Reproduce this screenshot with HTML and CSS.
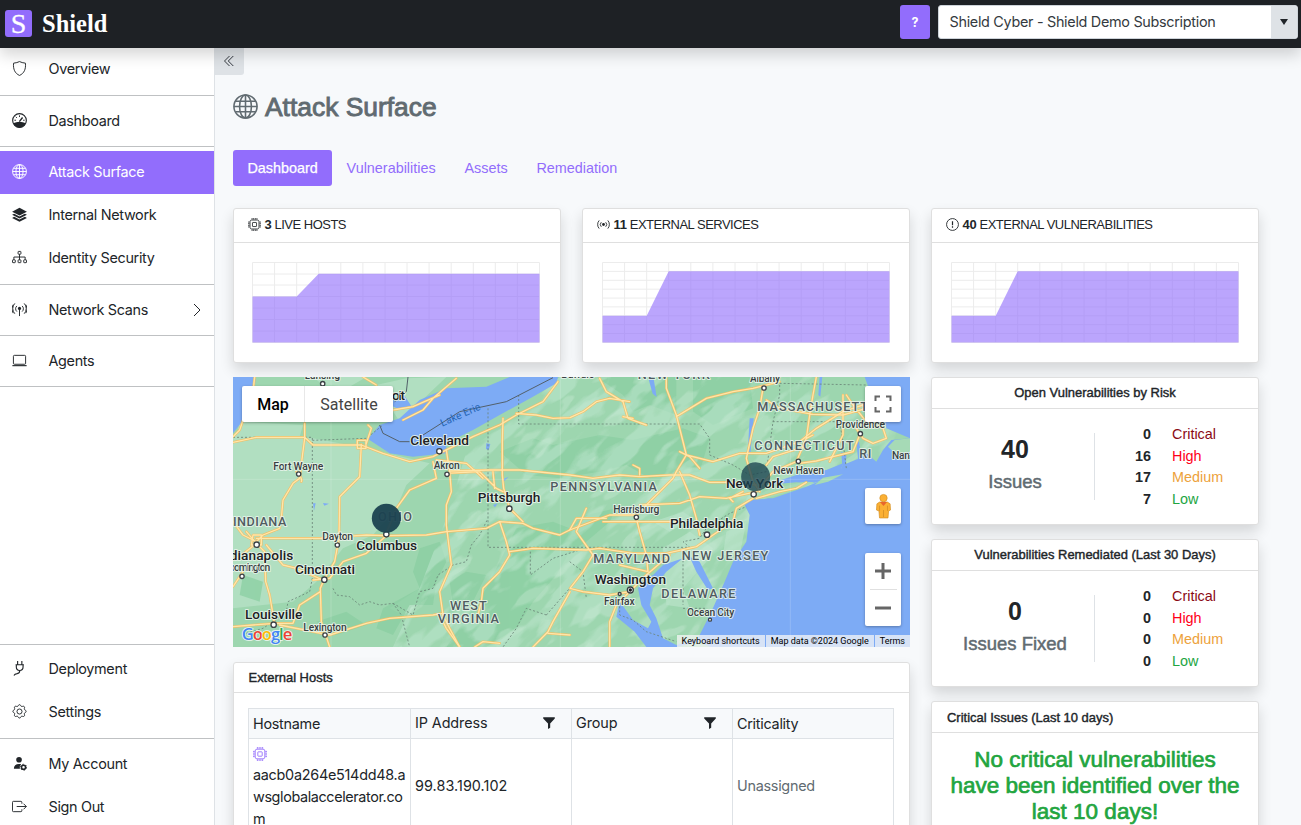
FILE: index.html
```html
<!DOCTYPE html>
<html lang="en">
<head>
<meta charset="utf-8">
<title>Shield - Attack Surface</title>
<link rel="stylesheet" href="styles.css">
</head>
<body>
<svg class="defs" width="0" height="0" aria-hidden="true">
  <symbol id="globe" viewBox="0 0 16 16"><g fill="none" stroke="currentColor"><circle cx="8" cy="8" r="7.4"/><ellipse cx="8" cy="8" rx="3.8" ry="7.4"/><path d="M8 .5v15M.5 8h15M1.6 4.6h12.8M1.6 11.4h12.8"/></g></symbol>
  <symbol id="cpu" viewBox="0 0 16 16"><g fill="none" stroke="currentColor"><rect x="2.5" y="2.5" width="11" height="11" rx="2"/><rect x="5.5" y="5.5" width="5" height="5" rx=".6"/><path d="M5 0v2M7 0v2M9 0v2M11 0v2M5 14v2M7 14v2M9 14v2M11 14v2M0 5h2M0 7h2M0 9h2M0 11h2M14 5h2M14 7h2M14 9h2M14 11h2"/></g></symbol>
  <symbol id="funnel" viewBox="0 0 12 12"><path fill="currentColor" d="M.2.3h11.600v1.300L7.200 6.600v4.200L5 12V6.600L.2 1.600z"/></symbol>
</svg>

<header class="topbar">
  <div class="brand"><span class="brand-mark">S</span><span class="brand-name">Shield</span></div>
  <div class="topbar-tools">
    <button class="help">?</button>
    <div class="select"><span class="select-value">Shield Cyber - Shield Demo Subscription</span><span class="select-arrow"><svg width="8" height="6" viewBox="0 0 8 6"><path d="M0 0h8L4 6z" fill="#212529"/></svg></span></div>
  </div>
</header>

<div class="shell">
  <nav class="sidebar">
    <div class="nav-group first">
      <a class="nav-item"><svg class="ico" viewBox="0 0 16 16"><path d="M8 .6C6.300 1.500 4.200 2 1.700 2.300 1 8.500 3 13.200 8 15.400c5-2.200 7-6.900 6.300-13.100C11.800 2 9.700 1.500 8 .6z" fill="none" stroke="currentColor"/></svg><span>Overview</span></a>
    </div>
    <div class="nav-group">
      <a class="nav-item"><svg class="ico" viewBox="0 0 16 16"><circle cx="8" cy="8" r="7.300" fill="none" stroke="currentColor" stroke-width="1.200"/><path fill="currentColor" d="M1.300 11c2-.9 4.300-1.400 6.700-1.400s4.700.5 6.700 1.400c-1 2.700-3.600 4.600-6.700 4.600S2.300 13.700 1.300 11z"/><path d="M7.800 9.200l3.500-4.400" stroke="currentColor" stroke-width="1.500"/><path d="M8 2.500v1.800M4 4l1.200 1.200M2.500 7.700h1.800M11.800 7.700h1.700" stroke="currentColor"/></svg><span>Dashboard</span></a>
    </div>
    <div class="nav-group roomy">
      <a class="nav-item active"><svg class="ico"><use href="#globe"/></svg><span>Attack Surface</span></a>
      <a class="nav-item"><svg class="ico" viewBox="0 0 16 16"><path fill="currentColor" d="M8 .9L15.900 5 8 9 .1 5zM2.300 7.200L.1 8.300 8 12.300l7.900-4-2.200-1.100L8 10.100zM2.300 10.500L.1 11.600 8 15.600l7.900-4-2.200-1.100L8 13.400z"/></svg><span>Internal Network</span></a>
      <a class="nav-item"><svg class="ico" viewBox="0 0 16 16"><g fill="none" stroke="currentColor"><rect x="6.500" y="1.500" width="3" height="3" rx=".5"/><path d="M8 4.500v6M2 10.500V7.500h12v3"/><rect x=".5" y="10.500" width="3" height="3" rx=".5"/><rect x="6.500" y="10.500" width="3" height="3" rx=".5"/><rect x="12.500" y="10.500" width="3" height="3" rx=".5"/></g></svg><span>Identity Security</span></a>
    </div>
    <div class="nav-group">
      <a class="nav-item"><svg class="ico" viewBox="0 0 16 16"><circle cx="8" cy="6.800" r="1.700" fill="currentColor"/><path d="M8 7v8M3 1.500a8 8 0 0 0 0 11M13 1.500a8 8 0 0 1 0 11M5.200 4.200a4 4 0 0 0 0 6M10.800 4.200a4 4 0 0 1 0 6M1.200 2.900a8 8 0 0 0 0 9M14.800 2.900a8 8 0 0 1 0 9" fill="none" stroke="currentColor"/></svg><span>Network Scans</span><svg class="chevron" viewBox="0 0 8 14"><path d="M1 1l6 6-6 6" fill="none" stroke="currentColor"/></svg></a>
    </div>
    <div class="nav-group">
      <a class="nav-item"><svg class="ico" viewBox="0 0 16 16"><rect x="1.500" y="2.500" width="13" height="9.500" rx="1" fill="none" stroke="currentColor"/><path d="M.4 13.500h15.200" stroke="currentColor" stroke-width="1.200"/></svg><span>Agents</span></a>
    </div>
    <div class="spacer"></div>
    <div class="nav-group lower">
      <a class="nav-item"><svg class="ico" viewBox="0 0 16 16"><path d="M6 0v4M10.500 0v4M3.800 4h8.900M4.600 4v2.500a3.600 3.600 0 0 0 7.200 0V4M8.200 10c.3 2.600-.7 3.200-2.700 3.500-1.600.2-2.800.7-3.400 2" fill="none" stroke="currentColor" stroke-width="1.200"/></svg><span>Deployment</span></a>
      <a class="nav-item"><svg class="ico" viewBox="0 0 16 16"><g fill="none" stroke="currentColor"><circle cx="8" cy="8" r="2.700"/><path d="M6.700 1.700c.4-1.300 2.200-1.300 2.600 0 .3.900 1.300 1.300 2.100.8 1.200-.6 2.500.7 1.900 1.900-.5.800 0 1.900.8 2.100 1.300.4 1.300 2.300 0 2.700-.8.200-1.300 1.300-.8 2.100.6 1.200-.7 2.500-1.900 1.900-.8-.5-1.800 0-2.100.8-.4 1.300-2.200 1.300-2.600 0-.3-.8-1.300-1.300-2.100-.8-1.200.6-2.500-.7-1.900-1.900.5-.8 0-1.900-.8-2.100-1.300-.4-1.300-2.300 0-2.700.8-.2 1.300-1.300.8-2.100-.6-1.200.7-2.500 1.900-1.900.8.5 1.800.1 2.100-.8z"/></g></svg><span>Settings</span></a>
    </div>
    <div class="nav-group last">
      <a class="nav-item"><svg class="ico" viewBox="0 0 16 16"><circle cx="7.500" cy="4" r="3" fill="currentColor"/><path fill="currentColor" d="M2 13.500C2 10.500 4 8.500 7.500 8.500c1 0 1.700.1 2.300.3a4.500 4.500 0 0 0-1.400 4.700z"/><circle cx="12.300" cy="12" r="2.200" fill="none" stroke="currentColor" stroke-width="1.700"/><circle cx="12.300" cy="12" r="3.200" fill="none" stroke="currentColor" stroke-width="1" stroke-dasharray="1.500 1.850"/></svg><span>My Account</span></a>
      <a class="nav-item"><svg class="ico" viewBox="0 0 16 16"><path d="M10.500 5V3.500a1 1 0 0 0-1-1h-8a1 1 0 0 0-1 1v9a1 1 0 0 0 1 1h8a1 1 0 0 0 1-1V11M5 8h10.300M12.300 5l3 3-3 3" fill="none" stroke="currentColor"/></svg><span>Sign Out</span></a>
    </div>
  </nav>

  <main class="content">
    <button class="collapse"><svg width="10" height="12" viewBox="0 0 10 12"><path d="M5.500 1l-5 5 5 5M9.300 1l-5 5 5 5" fill="none" stroke="#343a40"/></svg></button>
    <h1 class="title"><svg><use href="#globe"/></svg>Attack Surface</h1>
    <div class="tabs"><a class="tab on">Dashboard</a><a class="tab">Vulnerabilities</a><a class="tab">Assets</a><a class="tab">Remediation</a></div>

    <section class="stats">
      <article class="card stat">
        <div class="stat-head"><svg><use href="#cpu"/></svg><b>3</b><span>LIVE HOSTS</span></div>
        <svg class="chart" viewBox="0 0 288 81"><path class="grid" d="M.5 .5H287.500M.5 12H287.500M.5 23H287.500M.5 34.500H287.500M.5 46H287.500M.5 57.500H287.500M.5 69H287.500M.5 80.500H287.500M.5 .5V80.500M22.600 .5V80.500M44.700 .5V80.500M66.700 .5V80.500M88.800 .5V80.500M110.900 .5V80.500M133 .5V80.500M155 .5V80.500M177.100 .5V80.500M199.200 .5V80.500M221.300 .5V80.500M243.300 .5V80.500M265.400 .5V80.500M287.500 .5V80.500"/><path class="area" d="M.5 34.500H44.700L66.700 11.800H287.500V80.500H.5z"/></svg>
      </article>
      <article class="card stat">
        <div class="stat-head"><svg viewBox="0 0 16 16"><circle cx="8" cy="8" r="1.700" fill="currentColor"/><path d="M5.300 5.200a4 4 0 0 0 0 5.600M10.700 5.200a4 4 0 0 1 0 5.600M2.700 3a7.500 7.500 0 0 0 0 10M13.300 3a7.500 7.500 0 0 1 0 10" fill="none" stroke="currentColor" stroke-width="1.100"/></svg><b>11</b><span>EXTERNAL SERVICES</span></div>
        <svg class="chart" viewBox="0 0 288 81"><path class="grid" d="M.5 .5H287.500M.5 9.400H287.500M.5 18.300H287.500M.5 27.200H287.500M.5 36.100H287.500M.5 44.900H287.500M.5 53.800H287.500M.5 62.700H287.500M.5 71.600H287.500M.5 80.500H287.500M.5 .5V80.500M22.600 .5V80.500M44.700 .5V80.500M66.700 .5V80.500M88.800 .5V80.500M110.900 .5V80.500M133 .5V80.500M155 .5V80.500M177.100 .5V80.500M199.200 .5V80.500M221.300 .5V80.500M243.300 .5V80.500M265.400 .5V80.500M287.500 .5V80.500"/><path class="area" d="M.5 53.800H44.700L66.700 9.200H287.500V80.500H.5z"/></svg>
      </article>
      <article class="card stat">
        <div class="stat-head"><svg viewBox="0 0 16 16"><circle cx="8" cy="8" r="7.300" fill="none" stroke="currentColor" stroke-width="1.100"/><path d="M8 4v5M8 10.300v1.700" stroke="currentColor" stroke-width="1.500"/></svg><b>40</b><span>EXTERNAL VULNERABILITIES</span></div>
        <svg class="chart" viewBox="0 0 288 81"><path class="grid" d="M.5 .5H287.500M.5 9.400H287.500M.5 18.300H287.500M.5 27.200H287.500M.5 36.100H287.500M.5 44.900H287.500M.5 53.800H287.500M.5 62.700H287.500M.5 71.600H287.500M.5 80.500H287.500M.5 .5V80.500M22.600 .5V80.500M44.700 .5V80.500M66.700 .5V80.500M88.800 .5V80.500M110.900 .5V80.500M133 .5V80.500M155 .5V80.500M177.100 .5V80.500M199.200 .5V80.500M221.300 .5V80.500M243.300 .5V80.500M265.400 .5V80.500M287.500 .5V80.500"/><path class="area" d="M.5 53.800H44.700L66.700 9.200H287.500V80.500H.5z"/></svg>
      </article>
    </section>

    <div class="columns">
      <div class="col-main">
        <div class="map">
          <svg class="map-canvas" viewBox="0 6 2031 810">
            <defs>
              <filter id="forest" x="0" y="0" width="100%" height="100%"><feTurbulence type="fractalNoise" baseFrequency="0.006 0.018" numOctaves="3" seed="8"/><feColorMatrix values="0 0 0 0 .49  0 0 0 0 .775  0 0 0 0 .595  9 0 0 0 -4.500"/></filter>
              <filter id="valley" x="0" y="0" width="100%" height="100%"><feTurbulence type="fractalNoise" baseFrequency="0.007 0.018" numOctaves="3" seed="21"/><feColorMatrix values="0 0 0 0 .69  0 0 0 0 .875  0 0 0 0 .755  11 0 0 0 -6.500"/></filter>
              <clipPath id="hills"><path d="M480 816L560 640 640 430 700 230 850 120 980 6H2031V816z"/></clipPath>
            </defs>
            <rect y="6" width="2031" height="810" fill="#9dd6af"/>
            <g fill="#b1dfc1">
              <path d="M0 180L240 190 400 220 590 265 520 330 490 400 420 480 330 520 250 620 180 680 0 700z"/>
              <path d="M20 140L210 150 200 185 10 185zM240 6L400 6 350 35 270 30zM430 30L520 10 640 6 500 140z"/>
              <path d="M1290 520L1370 470 1440 520 1420 560 1350 640 1370 700 1300 690zM1480 470L1540 440 1520 540 1470 540z"/>
              <path d="M560 640L590 620 570 680 510 720 470 700zM1260 440L1350 410 1380 430 1310 470z"/>
            </g>
            <g fill="#8bcfa2" opacity=".75">
              <path d="M1090 6L1330 6 1330 120 1250 90 1200 110 1170 60zM1380 6L1550 6 1560 100 1440 150 1380 110z"/>
              <path d="M800 230L900 190 960 210 1100 180 1200 195 1350 160 1430 190 1400 290 1250 310 1180 270 1100 290 980 310 880 300z"/>
              <path d="M850 460L960 440 1010 460 1060 420 1150 400 1130 440 1060 500 1010 530 970 600 900 680 850 760 760 816 640 816 700 730 760 640 800 560z"/>
              <path d="M560 520L620 500 640 560 610 620 600 690 530 690 480 780 430 760 450 700 560 640 540 590zM650 620L700 590 760 600 720 680 660 690z"/>
              <path d="M250 740l90-30 60 40-90 30zM30 600l60 20-10 60-60-20z"/>
            </g>
            <g clip-path="url(#hills)"><g transform="rotate(-40 1200 400)">
              <rect x="200" y="-500" width="2000" height="1900" filter="url(#forest)" opacity=".6"/>
              <rect x="200" y="-500" width="2000" height="1900" filter="url(#valley)" opacity=".3"/>
            </g></g>
            <g fill="#7dabf5">
              <path d="M0 6H68L62 80 35 130 0 175z"/>
              <path d="M405 192L440 150 500 130 560 75 640 40 760 35 830 6H975L970 25 900 65 800 120 720 165 640 205 640 235 540 245 470 235z"/>
              <path d="M480 75l35-12 20 30-40 8-18-8z"/>
              <path d="M1895 6L1915 60 1950 110 1960 160 2031 190V6z"/>
              <path d="M1880 250L1900 235 1930 260 1950 225 1975 195 2031 190V816H1430L1400 800 1330 816H1240L1205 770 1150 725 1160 680 1175 700 1200 735 1245 760 1255 740 1225 690 1215 640 1232 615 1260 600 1290 570 1350 550 1300 590 1260 640 1250 690 1270 730 1290 790 1330 810 1395 790 1435 710 1475 620 1500 560 1540 500 1550 420 1535 390 1560 370 1620 370 1720 335 1790 305 1820 290 1830 270z"/>
              <path d="M1370 545L1400 560 1440 640 1425 645 1390 590zM1550 130l12 0-10 110-8-5zM1760 5l8 0-6 60-6-5zM1825 230l15 10-2 50-10-15zM1870 200l8 0 8 45-10 15zM1245 6l16 0 10 60-12-10z"/>
              <path d="M760 205l12 2-5 18-8-3zM240 385l8 0-5 22zM270 384l18 2-14 6zM805 315l22-10-14 14zM780 390l14-5-8 12z"/>
              <path d="M1600 330L1690 300 1780 285 1830 265 1820 300 1740 325 1690 322z"/>
            </g>
            <g fill="#a6dab6"><path d="M1545 375l60-30 110-25 30 2-80 30-70 20zM1745 330l25-22 60-10-45 22zM1965 215l20-20 46-5v40l-40 10zM1895 120l40 20 20 40-20 30-45-20z"/></g>

            <g fill="none" stroke="#6a8477" stroke-width="2.500" stroke-dasharray="6 6">
              <path d="M0 187H238V610L230 650 165 680 160 710 120 740 90 760 40 775M238 196L400 190 450 150M300 640L310 660 350 665 380 690 410 680 440 690 480 685 505 720 515 760 530 816M480 685L540 720 560 650 600 640 615 600 660 570 700 560 715 510 740 480 765 430M765 100V517H1370L1350 500 1400 490 1420 460 1490 415 1540 395M892 530V600L960 550 1040 525M940 720L880 700 850 760 810 816M940 720L1010 640"/>
              <path d="M857 60V147H1400L1430 190V240L1500 270 1550 300 1600 290 1620 140H1820L1830 200 1840 280M1640 6V60L1620 140M1640 25L1900 30M1350 520V690M1350 700H1420M1160 670V720L1200 735 1240 770 1330 800M1010 560L1050 590 1060 670"/>
            </g>
            <path d="M440 150L450 175 500 200H530M570 180L680 110 820 80 960 8M525 6L520 50 485 80" fill="none" stroke="#53606a" stroke-width="3"/>

            <defs><g id="roads" fill="none" stroke-linejoin="round" stroke-linecap="round">
              <path d="M0 202L70 187H215L240 210H385L450 235 530 260 600 245 720 185 800 150 850 120 930 80 975 20M0 185L20 165 60 50 65 6M215 145V190L208 245 200 310 180 325 150 375 145 430 140 460 90 480 70 500 30 480 0 440M70 490H260L400 480 460 482 580 480 640 470 760 460 800 440 870 445 900 460 980 480 1010 465 1030 430 1120 430"/>
              <path d="M385 208L380 305 345 340 320 365 318 490 305 560 275 610 262 640 265 740 290 816M262 650L200 690 180 745 125 745 60 750 0 755M125 750L110 660 98 620 95 530 70 505 40 470M460 482L400 535 330 560 290 610 240 615M460 475L490 400 530 345 610 310 600 260M100 510L150 570 190 580 270 615M70 505L20 545 0 555M30 590L0 635"/>
              <path d="M400 205L415 160 405 150M640 225L650 290 655 350 640 390V450L655 570 620 650 630 720 650 760 680 816M640 295L740 290 790 340 810 350M610 255L700 265 740 300 750 310M650 288L770 285H860L1011 300 1080 310 1160 300 1220 305 1310 300 1370 300 1430 322H1490L1570 330M810 130L808 200V300L812 340 830 400 870 440M780 290L785 340M800 440L820 500 830 540 800 590 750 640 745 680 730 740M830 530L900 520 1060 525 1100 520 1200 535 1300 535 1390 515 1440 480 1500 440 1510 400 1560 370"/>
              <path d="M140 750L290 780 400 745 470 730 600 720 630 715M620 720L640 760 680 816M1011 650L960 740 945 770 900 816M725 816L750 800 800 805M945 775L1011 780M850 115L910 120 960 130 1011 128 1050 110 1090 80 1130 70 1190 80M1100 10L1120 50 1170 80 1185 130 1240 150M1170 125L1200 130M1300 6V40L1330 120 1345 180 1360 240 1330 290 1320 310 1240 390 1210 420 1130 420 1010 465M1330 125L1420 70 1500 50 1560 40 1640 20M1360 240L1440 260 1520 235 1600 235 1700 200 1750 160 1830 110 1890 90"/>
              <path d="M1340 290L1370 360 1390 430 1400 480M1570 350L1480 370 1400 365 1340 385 1220 390M1210 430L1220 470 1240 540 1245 590M1110 440H1240L1330 440M1060 400L1030 470 1080 540 1050 590 1011 640 1050 650 1130 660 1190 650 1240 600 1310 540M1185 655L1150 690 1130 740 1130 816M1245 590L1160 570M1590 40L1580 100 1560 160 1540 250 1560 320 1580 350M1600 75L1640 100 1740 118 1830 120 1900 100M1750 6L1740 60 1730 120 1720 190 1690 260 1620 290 1570 350M1700 265L1750 258 1800 245 1860 230 1880 180M1600 270L1620 245 1700 220M1870 160L1890 190 1920 205 1960 190 1950 160 1900 140 1860 90 1840 60M1570 370L1640 350 1690 340 1720 322M1200 270L1220 280V300M1500 380L1490 370 1530 350M1340 230L1370 245 1400 280"/>
              <path d="M510 135L570 105 600 70 670 10M480 105L540 95 620 60M390 6L430 30M1830 60V180L1790 260M1720 190L1740 180"/>
              <path d="M373 196h26v24h-26zM190 290q20 20 15 30M60 480h25v30h-30z"/>
            </g></defs>
            <use href="#roads" stroke="#f0bf67" stroke-width="7.500"/>
            <use href="#roads" stroke="#ffe6a9" stroke-width="4"/>
            <path d="M0 313H2031M982 6V816M1672 6V816M294 6V816" stroke="#fff" stroke-opacity=".25" stroke-width="2"/>

            <g fill="#fff" stroke="#3c4246" stroke-width="4">
              <circle cx="269" cy="26" r="6.500"/><circle cx="619" cy="229" r="8"/><circle cx="642" cy="298" r="6.500"/><circle cx="197" cy="297" r="6.500"/><circle cx="829" cy="401" r="8"/><circle cx="71" cy="509" r="8"/><circle cx="313" cy="510" r="6.500"/><circle cx="460" cy="478" r="8"/><circle cx="274" cy="614" r="8"/><circle cx="27" cy="604" r="6.500"/><circle cx="122" cy="749" r="8"/><circle cx="276" cy="780" r="6.500"/>
              <circle cx="1593" cy="39" r="6.500"/><circle cx="1882" cy="176" r="6.500"/><circle cx="1696" cy="259" r="6.500"/><circle cx="1562" cy="358" r="8"/><circle cx="1210" cy="427" r="6.500"/><circle cx="1422" cy="479" r="8"/><circle cx="1192" cy="645" r="9"/><circle cx="1160" cy="657" r="4.500"/><circle cx="1431" cy="734" r="4.500"/>
            </g><circle cx="1192" cy="645" r="5" fill="#202124"/>

            <g class="state">
              <text x="80" y="453" textLength="160">INDIANA</text><text x="486" y="438" textLength="102">OHIO</text><text x="1112" y="348" textLength="320">PENNSYLVANIA</text><text x="706" y="705" textLength="110">WEST</text><text x="706" y="743" textLength="184">VIRGINIA</text><text x="1322" y="13" textLength="216">NEW YORK</text><text x="1752" y="107" textLength="358">MASSACHUSETTS</text><text x="1713" y="226" textLength="298">CONNECTICUT</text><text x="1897" y="250" textLength="36">RI</text><text x="1196" y="564" textLength="230">MARYLAND</text><text x="1476" y="556" textLength="260">NEW JERSEY</text><text x="1396" y="670" textLength="222">DELAWARE</text>
            </g>
            <circle cx="460" cy="430" r="43.500" fill="#1b4250" fill-opacity=".95"/>
            <g class="city">
              <text x="620" y="211" textLength="176">Cleveland</text><text x="828" y="382" textLength="188">Pittsburgh</text><text x="461" y="526" textLength="182">Columbus</text><text x="68" y="556" textLength="226">Indianapolis</text><text x="276" y="598" textLength="180">Cincinnati</text><text x="122" y="731" textLength="172">Louisville</text><text x="1565" y="339" textLength="172">New York</text><text x="1421" y="460" textLength="220">Philadelphia</text><text x="1192" y="628" textLength="214">Washington</text><text x="467" y="76" textLength="98">Detroit</text>
            </g>
            <g class="town">
              <text x="196" y="284" textLength="150">Fort Wayne</text><text x="641" y="282" textLength="78">Akron</text><text x="314" y="495" textLength="92">Dayton</text><text x="40" y="589" textLength="144">Bloomington</text><text x="276" y="767" textLength="130">Lexington</text><text x="268" y="11" textLength="106">Lansing</text><text x="1596" y="21" textLength="90">Albany</text><text x="1882" y="159" textLength="148">Providence</text><text x="1697" y="298" textLength="152">New Haven</text><text x="1210" y="414" textLength="138">Harrisburg</text><text x="1159" y="689" textLength="92">Fairfax</text><text x="1433" y="724" textLength="142">Ocean City</text><text x="1035" y="9" textLength="100">Buffalo</text><text x="2045" y="253" textLength="136">Nantucket</text>
            </g>
            <text class="lake" transform="translate(628 155) rotate(-24)" textLength="128">Lake Erie</text>
            <circle cx="1568" cy="305" r="43.500" fill="#1b4250" fill-opacity=".78"/>
            <text class="google" x="26" y="795" textLength="152"><tspan fill="#4285f4">G</tspan><tspan fill="#ea4335">o</tspan><tspan fill="#fbbc04">o</tspan><tspan fill="#4285f4">g</tspan><tspan fill="#34a853">l</tspan><tspan fill="#ea4335">e</tspan></text>
          </svg>
          <div class="map-type"><b>Map</b><span>Satellite</span></div>
          <div class="map-controls">
            <div class="ctl"><svg width="18" height="18" viewBox="0 0 18 18"><path d="M1.500 6V1.500H6M12 1.500h4.500V6M16.500 12v4.500H12M6 16.500H1.500V12" fill="none" stroke="#666" stroke-width="2"/></svg></div>
            <div class="ctl peg"><svg width="15" height="27" viewBox="0 0 17 28"><circle cx="8.500" cy="4.500" r="4.200" fill="#fbb034" stroke="#d08a1e" stroke-width=".7"/><path d="M4 9h9l3 2 .5 7-2.200 1-.7 8H4l-.7-8-2.800-1 .5-7z" fill="#fbb034" stroke="#d08a1e" stroke-width=".7"/><path d="M4.500 9h8l-4 4.500z" fill="#e8662c"/><path d="M8.500 18v8M4 13v6M13 13v6" stroke="#cf8a25" stroke-width=".8"/></svg></div>
            <div class="ctl zoomer"><svg width="16" height="16" viewBox="0 0 16 16"><path d="M8 0v16M0 8h16" stroke="#666" stroke-width="3"/></svg><i></i><svg width="16" height="16" viewBox="0 0 16 16"><path d="M0 8h16" stroke="#666" stroke-width="3"/></svg></div>
          </div>
          <div class="map-legal"><span>Keyboard shortcuts</span><span>Map data ©2024 Google</span><span>Terms</span></div>
        </div>

        <article class="card hosts">
          <h2 class="card-head">External Hosts</h2>
          <div class="table">
            <div class="th">Hostname</div><div class="th flt">IP Address<svg><use href="#funnel"/></svg></div><div class="th flt">Group<svg><use href="#funnel"/></svg></div><div class="th">Criticality</div>
            <div class="td host"><svg><use href="#cpu"/></svg>aacb0a264e514dd48.a<br><span class="tight">wsglobalaccelerator.co</span><br>m</div><div class="td ip">99.83.190.102</div><div class="td"></div><div class="td muted">Unassigned</div>
          </div>
        </article>
      </div>

      <div class="col-side">
        <article class="card risk">
          <h2 class="card-head center">Open Vulnerabilities by Risk</h2>
          <div class="risk-body">
            <div class="total"><strong>40</strong><span>Issues</span></div>
            <div class="levels"><b>0</b><span class="critical">Critical</span><b>16</b><span class="high">High</span><b>17</b><span class="medium">Medium</span><b>7</b><span class="low">Low</span></div>
          </div>
        </article>
        <article class="card risk">
          <h2 class="card-head center">Vulnerabilities Remediated (Last 30 Days)</h2>
          <div class="risk-body">
            <div class="total"><strong>0</strong><span>Issues Fixed</span></div>
            <div class="levels"><b>0</b><span class="critical">Critical</span><b>0</b><span class="high">High</span><b>0</b><span class="medium">Medium</span><b>0</b><span class="low">Low</span></div>
          </div>
        </article>
        <article class="card issues">
          <h2 class="card-head">Critical Issues (Last 10 days)</h2>
          <p class="none">No critical vulnerabilities<br>have been identified over the<br>last 10 days!</p>
        </article>
      </div>
    </div>
  </main>
</div>
</body>
</html>
```
FILE: styles.css
```css
* { box-sizing: border-box; }
body { margin: 0; height: 825px; overflow: hidden; background: #f7f9fb; color: #212529; font-family: "Liberation Sans", Arial, sans-serif; font-size: 14.4px; line-height: 21.6px; }
h1, h2, p { margin: 0; font-weight: 400; }
button { border: 0; padding: 0; font: inherit; }
.defs { display: block; }
body > .defs { position: absolute; }

.topbar { height: 48px; background: #1e2125; display: flex; justify-content: space-between; align-items: flex-start; padding: 0 3px 0 5px; box-shadow: 0 7px 14px rgba(0, 0, 0, .16); position: relative; z-index: 5; }
.brand { display: flex; align-items: center; gap: 10px; padding-top: 10px; color: #fff; font-family: "Liberation Serif", serif; }
.brand-mark { width: 27px; height: 27px; border-radius: 3px; background: #926dfc; font-size: 28px; line-height: 27px; text-align: center; -webkit-text-stroke: .3px #fff; }
.brand-name { font-size: 24.500px; line-height: 27px; font-weight: 700; letter-spacing: 0; }
.topbar-tools { display: flex; gap: 8px; padding-top: 5px; }
.help { width: 30px; height: 34px; border-radius: 3px; background: #926dfc; color: #fff; font: 700 12.5px "Inter", sans-serif; }
.select { width: 360px; height: 34px; background: #fff; border: 1px solid #ced4da; border-radius: 3px; display: flex; justify-content: space-between; overflow: hidden; color: #343a40; font: 14.4px/32px "Inter", sans-serif; letter-spacing: -.3px; }
.select-value { padding-left: 10.500px; }
.select-arrow { width: 26px; background: #dee2e6; display: flex; align-items: center; justify-content: center; }

.shell { display: flex; height: 777px; }
.sidebar { width: 215px; flex: none; background: #fff; border-right: 1px solid #dee2e6; display: flex; flex-direction: column; height: 781px; font: 14.4px/43px "Inter", sans-serif; letter-spacing: -.32px; }
.nav-group { padding: 4px 0 3px; border-bottom: 1px solid #bfc1c3; flex: none; }
.nav-group.first { padding: 0 0 4px; }
.nav-group.roomy { padding-bottom: 4px; }
.nav-group.lower { border-top: 1px solid #bfc1c3; padding: 3px 0 4px; }
.nav-group.last { border: 0; padding: 4px 0 0; }
.nav-item { display: flex; align-items: center; height: 43px; padding: 0 12px; }
.nav-item span { padding-bottom: 2px; }
.nav-item.active { background: #926dfc; color: #fff; }
.ico { width: 15px; height: 15px; margin: 0 21.500px 2px 0; flex: none; }
.chevron { width: 8px; height: 14px; margin: 0 1px 2px auto; }
.spacer { flex: 1; }

.content { flex: 1; min-width: 0; }
.collapse { display: flex; width: 29px; height: 27px; background: #dee2e6; border-radius: 0 0 3px 0; align-items: center; justify-content: center; padding: 0 2px 2px 0; }
.title { display: flex; align-items: center; gap: 7px; margin: 16px 0 0 18px; height: 32px; font-size: 26.4px; line-height: 32px; color: #616b71; -webkit-text-stroke: .9px #616b71; }
.title svg { width: 25px; height: 25px; margin-bottom: 2px; -webkit-text-stroke: 0; }
.tabs { display: flex; margin: 27px 0 0 18px; height: 36px; color: #926dfc; }
.tab { padding: 8px 14.400px 6px; border-radius: 3px; }
.tab.on { background: #926dfc; color: #fff; -webkit-text-stroke: .25px #fff; }

.card { background: #fff; border: 1px solid #dfdfdf; border-radius: 3px; box-shadow: 0 7px 14px rgba(0, 0, 0, .14); }
.stats { display: grid; grid-template-columns: repeat(3, 328px); gap: 21px; margin: 22px 0 0 18px; }
.stat { height: 155px; }
.stat-head { height: 34px; border-bottom: 1px solid #dfdfdf; padding: 0 14px 2px; display: flex; align-items: center; font-size: 12.960px; line-height: 30px; letter-spacing: -.48px; }
.stat-head svg { width: 13px; height: 13px; margin-right: 3.500px; }
.stat-head b { margin-right: 3px; letter-spacing: -.2px; }
.chart { display: block; width: 288px; height: 81px; margin: 19px 0 0 19px; }
.stat:first-child .chart { margin-left: 18px; }
.grid { fill: none; stroke: #ececec; }
.area { fill: #926dfc; fill-opacity: .62; }

.columns { display: flex; gap: 21px; margin: 14px 0 0 18px; align-items: flex-start; }
.col-main { width: 677px; display: flex; flex-direction: column; gap: 15px; }
.col-side { width: 328px; display: flex; flex-direction: column; gap: 14px; }

.map { position: relative; height: 270px; font-family: Roboto, sans-serif; overflow: hidden; }
.map-canvas { display: block; width: 677px; height: 270px; }
.map-canvas text { paint-order: stroke; stroke: #e9f5ec; stroke-width: 6px; stroke-linejoin: round; stroke-opacity: .85; text-anchor: middle; font-weight: 500; }
.state text { font-size: 38px; fill: #505b60; }
.city text { font-size: 41px; fill: #202124; }
.town text { font-size: 31px; fill: #3a3f42; }
.map-canvas .lake { font-size: 31px; fill: #2767b8; stroke: none; text-anchor: start; font-weight: 400; }
.map-canvas .google { font: 600 50px "Open Sans", sans-serif; stroke: #fff; stroke-width: 5px; text-anchor: start; }
.map-type { position: absolute; left: 9px; top: 9px; display: flex; width: 151px; height: 36px; background: #fff; border-radius: 2px; box-shadow: 0 1px 3px rgba(0, 0, 0, .3); font-size: 16px; line-height: 37px; text-align: center; color: #444; }
.map-type b { width: 63px; color: #000; font-weight: 500; border-right: 1px solid #e8e8e8; }
.map-type span { flex: 1; }
.map-controls { position: absolute; right: 9px; top: 9px; }
.ctl { width: 36px; height: 36px; background: #fff; border-radius: 2px; box-shadow: 0 1px 3px rgba(0, 0, 0, .3); display: flex; align-items: center; justify-content: center; }
.peg { margin-top: 66px; }
.zoomer { margin-top: 29px; height: 73px; flex-direction: column; justify-content: space-between; padding: 10px 0; }
.zoomer i { width: 27px; height: 1px; background: #e0e0e0; }
.map-legal { position: absolute; right: 0; bottom: 0; display: flex; gap: 1px; height: 12px; font-size: 9px; line-height: 12px; color: #000; }
.map-legal span { background: rgba(245, 245, 245, .75); padding: 0 5px; white-space: nowrap; }

.card-head { height: 31px; padding-left: 15px; border-bottom: 1px solid #dfdfdf; font-size: 12.960px; line-height: 31px; -webkit-text-stroke: .4px #212529; }
.card-head.center { padding: 0; line-height: 30px; text-align: center; }
.hosts { height: 200px; }
.table { display: grid; grid-template-columns: 162px 161px 161px 161px; width: 646px; margin: 15px 0 0 14px; border-left: 1px solid #dee2e6; border-top: 1px solid #dee2e6; font: 14.4px/21.6px "Inter", sans-serif; letter-spacing: -.27px; }
.hosts .card-head { height: 30px; line-height: 29px; padding-left: 14.500px; }
.th { height: 30px; background: #f7f9fb; border-right: 1px solid #dee2e6; border-bottom: 1px solid #dee2e6; padding: 4px; line-height: 22px; }
.flt { display: flex; justify-content: space-between; padding: 3px 16px 4px 4px; }
.flt svg { width: 12px; height: 12px; margin-top: 5px; }
.flt { letter-spacing: -.1px; }
.td { height: 95px; border-right: 1px solid #dee2e6; padding: 0 4px; line-height: 94px; }
.td.ip { letter-spacing: .05px; }
.host { line-height: 22px; padding-top: 8px; white-space: nowrap; }
.host svg { display: block; width: 14px; height: 14px; color: #926dfc; margin-bottom: 3px; }
.tight { letter-spacing: -.38px; }
.muted { color: #616b71; }

.risk { height: 148px; }
.risk-body { display: flex; padding-top: 14px; }
.total { width: 163px; height: 67px; margin-top: 10px; padding-left: 4px; border-right: 1px solid #dee2e6; display: flex; flex-direction: column; align-items: center; }
.total strong { font-size: 25px; line-height: 32px; }
.total span { font-size: 18.500px; line-height: 34px; color: #616b71; -webkit-text-stroke: .5px #616b71; }
.levels { display: grid; grid-template-columns: 56px 1fr; column-gap: 21px; grid-auto-rows: 21.600px; line-height: 22px; }
.levels b { text-align: right; }
.critical { color: #8b0a14; }
.high { color: #ff0018; }
.medium { color: #eda23b; }
.low { color: #22a53f; }
.issues { height: 160px; }
.none { padding-top: 14px; text-align: center; color: #22a53f; font-size: 22.500px; line-height: 26px; -webkit-text-stroke: .7px #22a53f; }
```
